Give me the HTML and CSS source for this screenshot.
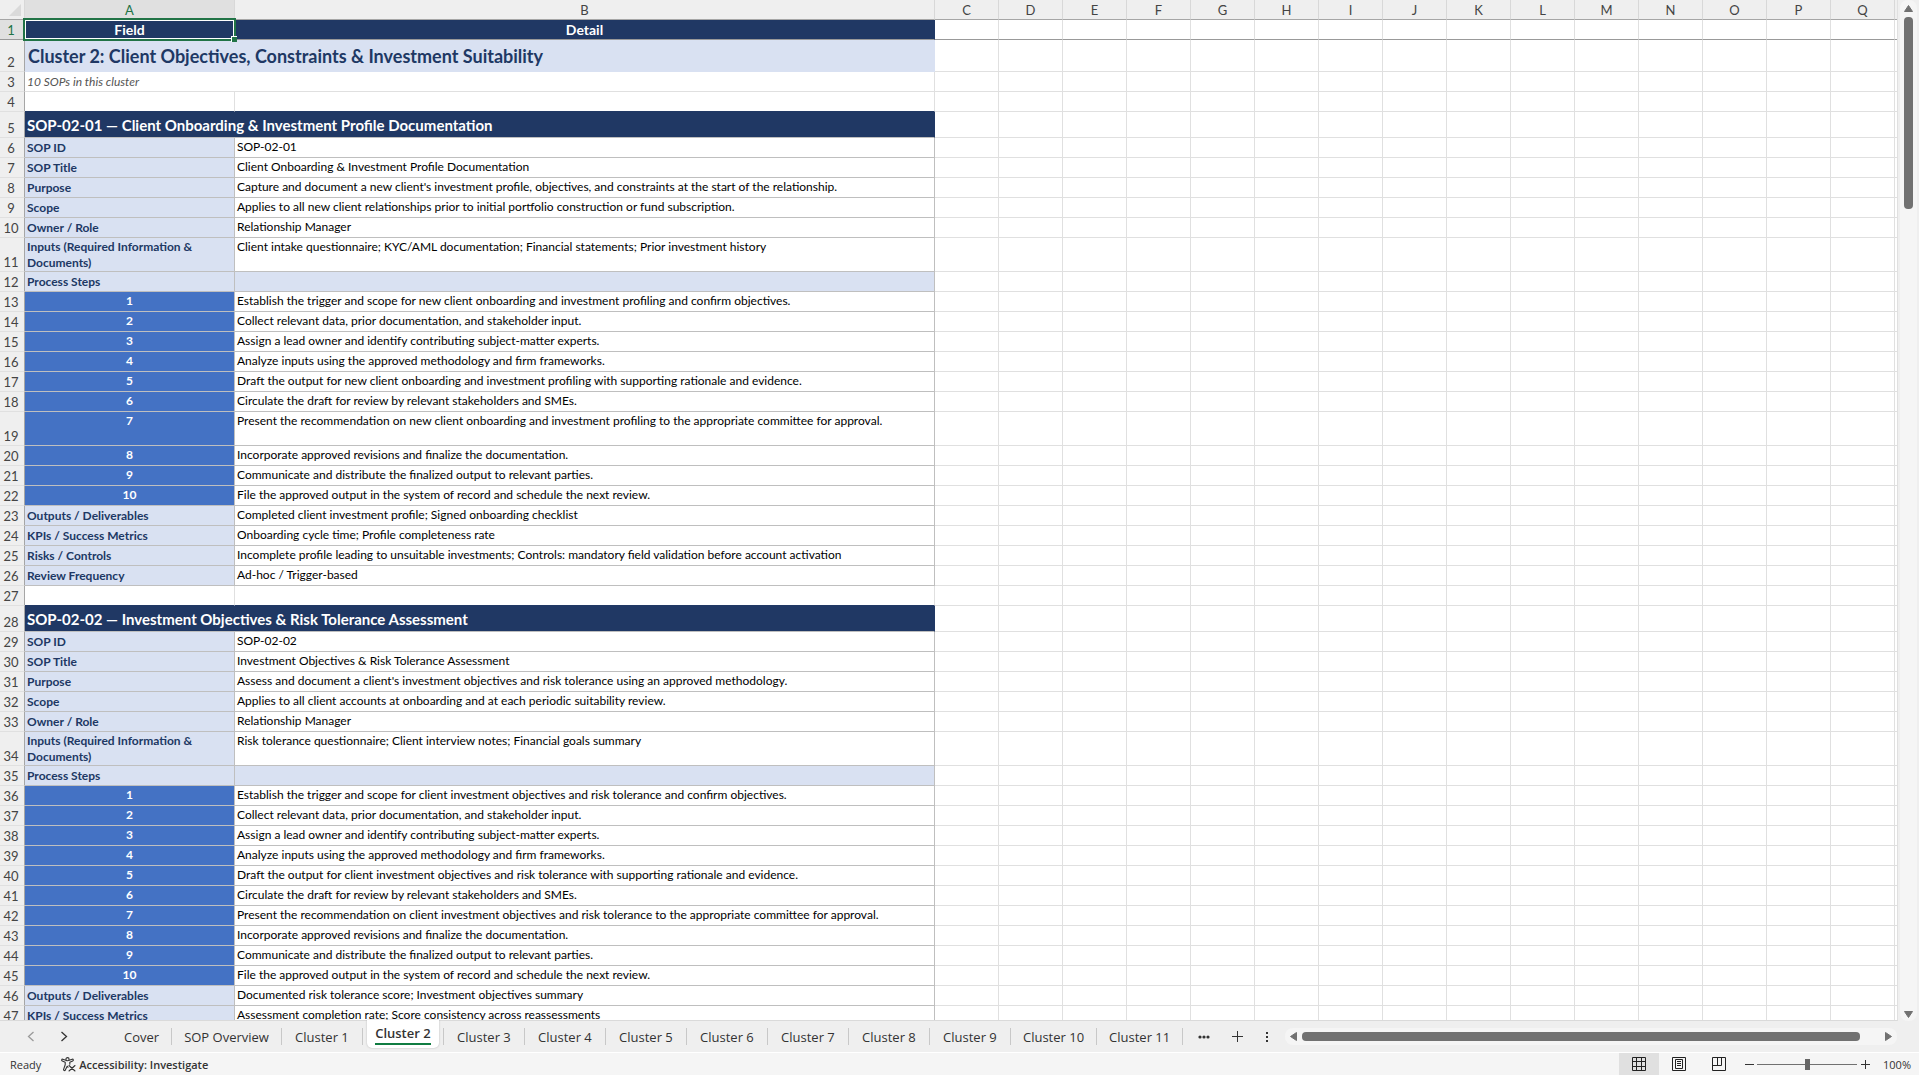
FILE: index.html
```
<!DOCTYPE html>
<html lang="en">
<head>
    <meta charset="UTF-8">
    <meta name="viewport" content="width=device-width, initial-scale=1.0">
    <title>Cluster 2</title>
    <link rel="stylesheet" href="styles.css">
</head>
<body>
    <main class="workspace">
        <div class="sheet">
            <table class="grid" id="grid">
                <colgroup id="cols">
                    <col class="col-head">
                    <col class="col-a">
                    <col class="col-b">
                </colgroup>
                <thead>
                    <tr id="letters">
                        <th class="corner"><svg width="12" height="12" viewBox="0 0 12 12"><path d="M12 0v12H0z" fill="#dadada"/></svg></th>
                        <th class="selected">A</th>
                        <th>B</th>
                    </tr>
                </thead>
                <tbody id="rows"></tbody>
            </table>
        </div>
        <div class="vscroll">
            <svg width="9" height="7" viewBox="0 0 9 7"><path d="M4.500 .5L8.500 6.500h-8z" fill="#717171" stroke="#717171" stroke-linejoin="round"/></svg>
            <div class="vthumb"></div>
            <svg class="last" width="9" height="7" viewBox="0 0 9 7"><path d="M4.500 6.500L.5 .5h8z" fill="#717171" stroke="#717171" stroke-linejoin="round"/></svg>
        </div>
    </main>

    <nav class="tabbar">
        <div class="tab-nav">
            <button aria-label="Previous sheets"><svg width="8" height="11" viewBox="0 0 8 11"><path d="M6.500 1L1.500 5.500l5 4.500" fill="none" stroke="#9a9a9a" stroke-width="1.300"/></svg></button>
            <button aria-label="Next sheets"><svg width="8" height="11" viewBox="0 0 8 11"><path d="M1.500 1l5 4.500-5 4.500" fill="none" stroke="#333" stroke-width="1.300"/></svg></button>
        </div>
        <ul class="tabs">
            <li><button>Cover</button></li>
            <li><button>SOP Overview</button></li>
            <li><button>Cluster 1</button></li>
            <li class="active"><button><span>Cluster 2</span></button></li>
            <li><button>Cluster 3</button></li>
            <li><button>Cluster 4</button></li>
            <li><button>Cluster 5</button></li>
            <li><button>Cluster 6</button></li>
            <li><button>Cluster 7</button></li>
            <li><button>Cluster 8</button></li>
            <li><button>Cluster 9</button></li>
            <li><button>Cluster 10</button></li>
            <li><button>Cluster 11</button></li>
        </ul>
        <div class="tab-tools">
            <button class="more" aria-label="More sheets"><svg width="12" height="4" viewBox="0 0 12 4" fill="#333"><circle cx="2" cy="2" r="1.600"/><circle cx="6" cy="2" r="1.600"/><circle cx="10" cy="2" r="1.600"/></svg></button>
            <button class="add" aria-label="New sheet"><svg width="11" height="11" viewBox="0 0 11 11"><path d="M5.500 0v11M0 5.500h11" stroke="#333"/></svg></button>
            <span class="grip"><svg width="2" height="10" viewBox="0 0 2 10" fill="#333"><path d="M0 0h2v2H0zM0 4h2v2H0zM0 8h2v2H0z"/></svg></span>
        </div>
        <div class="hscroll">
            <svg width="7" height="9" viewBox="0 0 7 9"><path d="M.5 4.500L6.500 .5v8z" fill="#717171" stroke="#717171" stroke-linejoin="round"/></svg>
            <div class="hthumb"></div>
            <svg width="7" height="9" viewBox="0 0 7 9"><path d="M6.500 4.500L.5 .5v8z" fill="#717171" stroke="#717171" stroke-linejoin="round"/></svg>
        </div>
    </nav>

    <footer class="status">
        <span class="ready">Ready</span>
        <button class="access">
            <svg width="15" height="15" viewBox="0 0 15 15" fill="none" stroke="#333" stroke-width="1.100" stroke-linejoin="round" stroke-linecap="round">
                <circle cx="6.500" cy="2.200" r="1.600"/>
                <path d="M4.800 3.300L1.800 2.200C.6 1.900.2 3.500 1.300 3.900L4.200 5.200v2.600L2.600 12.400c-.3 1.200 1.300 1.700 1.700.6L6.200 9.200l.8 1"/>
                <path d="M8.200 3.300l3-1.100c1.200-.3 1.600 1.300.5 1.700L8.800 5.200v2"/>
                <path d="M8 8.500l6 5.500M14 8.500L8 14"/>
            </svg>
            Accessibility: Investigate
        </button>
        <div class="views">
            <button class="on" aria-label="Normal view"><svg width="14" height="14" viewBox="0 0 14 14" fill="none" stroke="#222"><path d="M.5 .5h13v13H.5zM.5 4.500h13M.5 9.500h13M4.500 .5v13M9.500 .5v13"/></svg></button>
            <button aria-label="Page layout"><svg width="14" height="14" viewBox="0 0 14 14" fill="none" stroke="#222"><path d="M.5 .5h13v13H.5zM3.500 2.500h7v9h-7zM5 4.500h4M5 6.500h4M5 8.500h4"/></svg></button>
            <button aria-label="Page break preview"><svg width="14" height="14" viewBox="0 0 14 14" fill="none" stroke="#222"><path d="M.5 .5h13v13H.5zM.5 8.500h9v-8M5.500 .5v8"/></svg></button>
        </div>
        <div class="zoom">
            <button aria-label="Zoom out"><svg width="9" height="9" viewBox="0 0 9 9"><path d="M0 4.500h9" stroke="#333"/></svg></button>
            <input type="range" min="0" max="100" value="50" aria-label="Zoom">
            <button aria-label="Zoom in"><svg width="9" height="9" viewBox="0 0 9 9"><path d="M0 4.500h9M4.500 0v9" stroke="#333"/></svg></button>
            <span class="percent">100%</span>
        </div>
    </footer>
    <script src="sheet.js"></script>
</body>
</html>
```
FILE: styles.css
```
* {
    box-sizing: border-box;
}
body {
    margin: 0;
    height: 100vh;
    display: flex;
    flex-direction: column;
    overflow: hidden;
    background-color: #efefef;
    color: #333;
    font-family: "Open Sans", "Noto Sans", sans-serif;
}
button {
    display: flex;
    align-items: center;
    justify-content: center;
    padding: 0;
    border: none;
    background: none;
    color: inherit;
    font: inherit;
    cursor: pointer;
}
svg {
    display: block;
    flex: none;
}

/* worksheet */
.workspace {
    flex: 1;
    min-height: 0;
    display: flex;
}
.sheet {
    flex: 1;
    min-width: 0;
    overflow: hidden;
    background-color: white;
    border-right: 1px solid #e0e0e0;
    border-bottom: 1px solid #dadada;
}
.grid {
    width: 100%;
    table-layout: fixed;
    border-collapse: separate;
    border-spacing: 0;
    font-family: Lato, "Open Sans", sans-serif;
    font-size: 12px;
    line-height: 16px;
}
.col-head {
    width: 25px;
}
.col-a {
    width: 210px;
}
.col-b {
    width: 700px;
}
.col {
    width: 64px;
}
.grid tr {
    height: 20px;
}
.grid tr.tall {
    height: 34px;
}
.grid tr.section {
    height: 26px;
}
.grid tr.title {
    height: 32px;
}
.grid th,
.grid td {
    padding: 0 2px;
    border-right: 1px solid #e0e0e0;
    border-bottom: 1px solid #e0e0e0;
    text-align: left;
    vertical-align: top;
}
.grid thead th {
    padding: 0 0 1px;
    background-color: #efefef;
    border-right-color: #d8d8d8;
    border-bottom-color: #a6a6a6;
    color: #444;
    font-size: 13px;
    font-weight: 400;
    text-align: center;
    vertical-align: bottom;
}
.corner svg {
    margin: 0 0 2px 9px;
}
.grid tbody th {
    padding: 0 4px 1px 2px;
    background-color: #efefef;
    border-right-color: #a6a6a6;
    color: #444;
    font-size: 13px;
    font-weight: 400;
    text-align: center;
    vertical-align: bottom;
    white-space: nowrap;
}
/* the leftover strip after the last lettered column */
.grid .rest {
    padding: 0;
    border-right: none;
}
.grid .selected {
    background-color: #e0e0e0 !important;
    color: #217346 !important;
}

.frozen th,
.frozen td {
    border-bottom-color: #999 !important;
}
.grid .head {
    background-color: #203864;
    border-right-color: #203864;
    color: white;
    font-size: 14px;
    font-weight: 700;
    text-align: center;
    vertical-align: middle;
}
.current {
    position: relative;
}
.cursor {
    position: absolute;
    inset: -2px;
    border: 2px solid #217346;
    box-shadow: inset 0 0 0 1px white;
}
.handle {
    position: absolute;
    right: -3px;
    bottom: -3px;
    width: 6px;
    height: 6px;
    background-color: #217346;
    border-top: 1px solid white;
    border-left: 1px solid white;
}
.title .wide {
    padding-left: 3px;
    background-color: #d9e1f2;
    border-color: #d9e1f2;
    color: #203864;
    font-size: 18px;
    font-weight: 700;
    vertical-align: middle;
}
.note .wide {
    color: #555;
    font-style: italic;
    vertical-align: middle;
}
.before td:nth-child(2),
.before td:nth-child(3) {
    border-bottom-color: #203864;
}
.section .wide {
    background-color: #203864;
    border-right-color: #203864;
    border-bottom-color: #bfbfbf;
    color: white;
    font-size: 15px;
    font-weight: 700;
    vertical-align: middle;
}
.grid .label,
.grid .step,
.grid .value {
    border-color: #bfbfbf;
}
.grid .label {
    background-color: #d9e1f2;
    color: #203864;
    font-weight: 700;
    vertical-align: middle;
}
.grid .step {
    padding-top: 1px;
    background-color: #4472c4;
    color: white;
    font-weight: 700;
    text-align: center;
}
.grid .value {
    padding-top: 1px;
    color: black;
}
.grid .fill {
    background-color: #d9e1f2;
}

/* scroll bars */
.vscroll {
    width: 17px;
    margin: 0 2px 0 2px;
    padding: 5px 0 3px;
    display: flex;
    flex-direction: column;
    align-items: center;
    background-color: #f5f5f5;
    border-radius: 8px;
}
.vthumb {
    width: 9px;
    height: 19%;
    margin-top: 5px;
    background-color: #717171;
    border-radius: 4px;
}
.vscroll .last {
    margin-top: auto;
}
.hscroll {
    flex: 1;
    height: 17px;
    margin-right: 22px;
    padding: 0 5px;
    display: flex;
    align-items: center;
    justify-content: space-between;
    background-color: #f5f5f5;
    border-radius: 8px;
}
.hthumb {
    flex: 1;
    height: 9px;
    margin: 0 25px 0 5px;
    background-color: #717171;
    border-radius: 4px;
}

/* sheet tabs */
.tabbar {
    height: 31px;
    display: flex;
    align-items: center;
    font-size: 13px;
}
.tab-nav {
    width: 112px;
    padding-left: 14px;
    display: flex;
}
.tab-nav button {
    width: 33px;
    height: 24px;
}
.tabs {
    height: 100%;
    margin: 0;
    padding: 0;
    display: flex;
    list-style: none;
}
.tabs li {
    display: flex;
    align-items: center;
}
.tabs li + li {
    min-width: 81px;
}
.tabs li::after {
    content: "";
    width: 1px;
    height: 17px;
    background-color: #c8c8c8;
}
.tabs button {
    flex: 1;
    height: 100%;
    padding: 0 12px;
    white-space: nowrap;
}
.tabs .active button {
    align-self: flex-start;
    height: 28px;
    margin: -1px 4px 0;
    padding: 0 8px;
    background-color: white;
    border-radius: 0 0 5px 5px;
    box-shadow: 0 0 2px rgba(0, 0, 0, 0.25);
    font-weight: 600;
}
.active span {
    border-bottom: 2px solid #107c41;
    line-height: 19px;
}
.tab-tools {
    display: flex;
    align-items: center;
}
.more {
    width: 42px;
    height: 24px;
}
.add {
    width: 24px;
    height: 24px;
}
.grip {
    width: 36px;
    display: flex;
    justify-content: center;
}

/* status bar */
.status {
    height: 23px;
    display: flex;
    align-items: center;
    background-color: #f5f5f5;
    border-top: 1px solid white;
    font-size: 11px;
}
.ready {
    margin: 0 20px 0 10px;
}
.access {
    gap: 3px;
    font-weight: 600;
}
.views {
    height: 100%;
    margin-left: auto;
    display: flex;
}
.views button {
    width: 40px;
}
.views .on {
    background-color: #e0e0e0;
}
.zoom {
    padding: 0 8px 0 2px;
    display: flex;
    align-items: center;
}
.zoom button {
    width: 16px;
    height: 16px;
}
.zoom input {
    -webkit-appearance: none;
    appearance: none;
    width: 100px;
    height: 11px;
    margin: 0;
    background: linear-gradient(#717171, #717171) center / 100% 1px no-repeat;
}
.zoom input::-webkit-slider-thumb {
    -webkit-appearance: none;
    width: 5px;
    height: 11px;
    background-color: #666;
}
.percent {
    margin-left: 10px;
}
```
FILE: sheet.js
```
const LETTERS = "CDEFGHIJKLMNOPQ".split("");

// topic is the phrase used inside the standard ten steps
function sop(id, title, purpose, scope, inputs, topic, longStep, tail) {
    return [
        { type: "section", text: id + " — " + title },
        { label: "SOP ID", text: id },
        { label: "SOP Title", text: title },
        { label: "Purpose", text: purpose },
        { label: "Scope", text: scope },
        { label: "Owner / Role", text: "Relationship Manager" },
        { label: "Inputs (Required Information & Documents)", text: inputs, tall: true },
        { label: "Process Steps", text: "", fill: true },
        { step: 1, text: "Establish the trigger and scope for " + topic + " and confirm objectives." },
        { step: 2, text: "Collect relevant data, prior documentation, and stakeholder input." },
        { step: 3, text: "Assign a lead owner and identify contributing subject-matter experts." },
        { step: 4, text: "Analyze inputs using the approved methodology and firm frameworks." },
        { step: 5, text: "Draft the output for " + topic + " with supporting rationale and evidence." },
        { step: 6, text: "Circulate the draft for review by relevant stakeholders and SMEs." },
        { step: 7, text: "Present the recommendation on " + topic + " to the appropriate committee for approval.", tall: longStep },
        { step: 8, text: "Incorporate approved revisions and finalize the documentation." },
        { step: 9, text: "Communicate and distribute the finalized output to relevant parties." },
        { step: 10, text: "File the approved output in the system of record and schedule the next review." },
        ...tail
    ];
}

const rows = [
    { type: "frozen" },
    { type: "title", text: "Cluster 2: Client Objectives, Constraints & Investment Suitability" },
    { type: "note", text: "10 SOPs in this cluster" },
    { type: "before" },
    ...sop("SOP-02-01", "Client Onboarding & Investment Profile Documentation",
        "Capture and document a new client's investment profile, objectives, and constraints at the start of the relationship.",
        "Applies to all new client relationships prior to initial portfolio construction or fund subscription.",
        "Client intake questionnaire; KYC/AML documentation; Financial statements; Prior investment history",
        "new client onboarding and investment profiling", true, [
            { label: "Outputs / Deliverables", text: "Completed client investment profile; Signed onboarding checklist" },
            { label: "KPIs / Success Metrics", text: "Onboarding cycle time; Profile completeness rate" },
            { label: "Risks / Controls", text: "Incomplete profile leading to unsuitable investments; Controls: mandatory field validation before account activation" },
            { label: "Review Frequency", text: "Ad-hoc / Trigger-based" }
        ]),
    { type: "before" },
    ...sop("SOP-02-02", "Investment Objectives & Risk Tolerance Assessment",
        "Assess and document a client's investment objectives and risk tolerance using an approved methodology.",
        "Applies to all client accounts at onboarding and at each periodic suitability review.",
        "Risk tolerance questionnaire; Client interview notes; Financial goals summary",
        "client investment objectives and risk tolerance", false, [
            { label: "Outputs / Deliverables", text: "Documented risk tolerance score; Investment objectives summary" },
            { label: "KPIs / Success Metrics", text: "Assessment completion rate; Score consistency across reassessments" }
        ])
];

function addCell(tr, className, text, tag) {
    const cell = document.createElement(tag || "td");
    cell.className = className;
    cell.textContent = text;
    tr.append(cell);
    return cell;
}

const cols = document.getElementById("cols");
const letters = document.getElementById("letters");

for (const letter of LETTERS) {
    const col = document.createElement("col");
    col.className = "col";
    cols.append(col);
    addCell(letters, "", letter, "th");
}
cols.append(document.createElement("col"));
addCell(letters, "rest", "", "th");

rows.forEach((row, i) => {
    const tr = document.createElement("tr");
    tr.className = row.tall ? "tall" : row.type || "";
    addCell(tr, i === 0 ? "selected" : "", i + 1, "th");

    if (row.type === "frozen") {
        const current = addCell(tr, "head current", "Field");
        current.insertAdjacentHTML("beforeend", '<div class="cursor"></div><div class="handle"></div>');
        addCell(tr, "head", "Detail");
    } else if (row.type === "before") {
        addCell(tr, "", "");
        addCell(tr, "", "");
    } else if (row.type) {
        addCell(tr, "wide", row.text).colSpan = 2;
    } else {
        addCell(tr, row.step ? "step" : "label", row.step || row.label);
        addCell(tr, row.fill ? "value fill" : "value", row.text);
    }

    LETTERS.forEach(() => addCell(tr, "", ""));
    addCell(tr, "rest", "");
    document.getElementById("rows").append(tr);
});
```
